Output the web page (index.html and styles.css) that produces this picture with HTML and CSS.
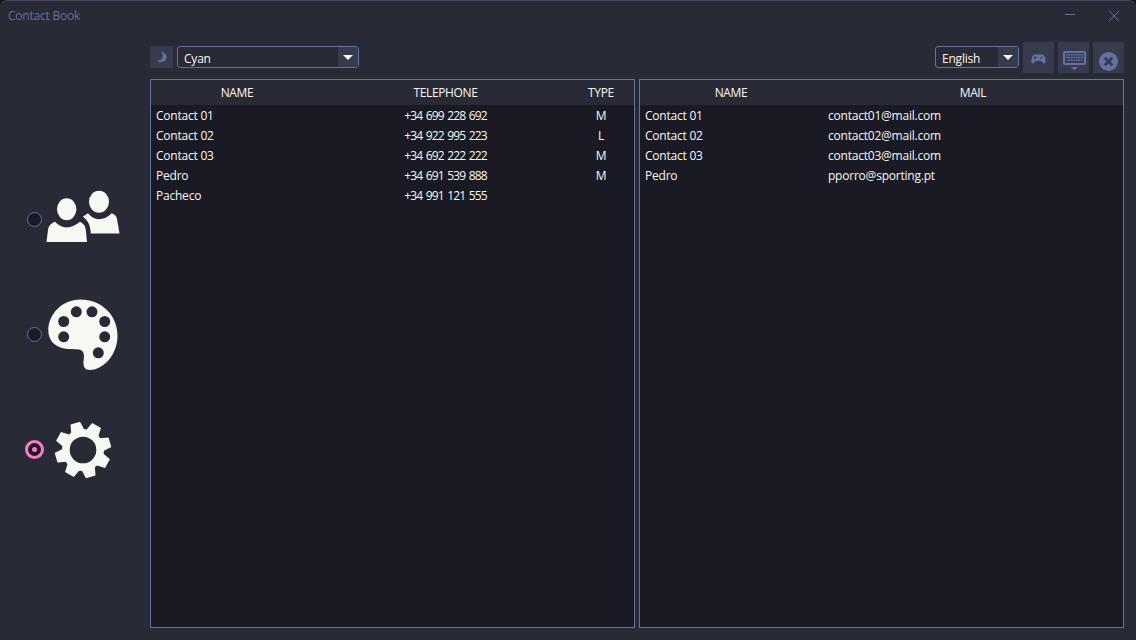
FILE: index.html
```html
<!DOCTYPE html>
<html lang="en">
<head>
<meta charset="utf-8">
<title>Contact Book</title>
<link rel="stylesheet" href="styles.css">
</head>
<body>
<div class="window">
  <header class="titlebar">
    <span class="title">Contact Book</span>
    <svg class="win-btn min" width="12" height="12" viewBox="0 0 12 12"><path d="M1 4.500H11" stroke="#6272a4" stroke-width="1"/></svg>
    <svg class="win-btn close" width="12" height="12" viewBox="0 0 12 12"><path d="M1 .8L11.200 11M11.200 .8L1 11" stroke="#6272a4" stroke-width="1"/></svg>
  </header>
  <div class="body">
    <nav class="sidebar">
      <div class="nav-row">
        <span class="radio"></span>
        <svg class="nav-icon people" width="74" height="52" viewBox="46 190 74 52">
          <ellipse cx="66.700" cy="209.300" rx="9.700" ry="11"/>
          <path d="M46.500 242L48 230C48.700 226 50 224 55 221.800C58 225 62 227.400 66.700 227.400C71.500 227.400 76 225 80 221.800C84 224 85.300 226 85.800 230L87 242Z"/>
          <ellipse cx="99" cy="201.700" rx="10" ry="11"/>
          <path d="M82.700 216.700L88 213.300C91 217 95 219.300 99 219.300C103.500 219.300 108 217 111.700 213.300C115 214.500 116.500 216 117 219L119.500 233.500H90.700C90.700 226 88 220 82.700 216.700Z"/>
        </svg>
      </div>
      <div class="nav-row">
        <span class="radio"></span>
        <svg class="nav-icon palette" width="72" height="72" viewBox="47 299.500 72 72">
          <path d="M80 300C102 300 117.500 316 117.500 336C117.500 355 104 370 90 370.500C85 370.500 83 367 83.500 362C84.500 356 84.500 351 79 350C74 349.500 70 350 64 349C54 347 48.300 340 48.300 331C48.300 314 63 300 80 300Z"/>
          <g class="hole">
            <circle cx="63.700" cy="322" r="5.500"/>
            <circle cx="76.300" cy="312.300" r="5.500"/>
            <circle cx="92" cy="312.300" r="5.500"/>
            <circle cx="104.700" cy="322" r="5.500"/>
            <circle cx="104.700" cy="337.300" r="5.500"/>
            <circle cx="98.300" cy="353.300" r="5.500"/>
            <circle cx="63.700" cy="337.300" r="5.500"/>
          </g>
        </svg>
      </div>
      <div class="nav-row">
        <span class="radio on"></span>
        <svg class="nav-icon gear" width="60" height="60" viewBox="-30 -30 60 60">
          <circle r="21"/>
          <g>
            <path transform="rotate(-16)" d="M-5 -28H5L6.800 -19H-6.800Z"/>
            <path transform="rotate(29)" d="M-5 -28H5L6.800 -19H-6.800Z"/>
            <path transform="rotate(74)" d="M-5 -28H5L6.800 -19H-6.800Z"/>
            <path transform="rotate(119)" d="M-5 -28H5L6.800 -19H-6.800Z"/>
            <path transform="rotate(164)" d="M-5 -28H5L6.800 -19H-6.800Z"/>
            <path transform="rotate(209)" d="M-5 -28H5L6.800 -19H-6.800Z"/>
            <path transform="rotate(254)" d="M-5 -28H5L6.800 -19H-6.800Z"/>
            <path transform="rotate(299)" d="M-5 -28H5L6.800 -19H-6.800Z"/>
          </g>
          <circle class="hole" r="13.300"/>
        </svg>
      </div>
    </nav>
    <main class="main">
      <div class="toolbar">
        <button class="moon-btn">
          <svg width="12" height="12" viewBox="0 0 12 12"><path d="M5 .5C9 1.500 11 4 10.500 7C10 10 7 11.500 3.500 11C2.500 10.800 1.500 10.200 1 9.500C4 10 6.500 8.500 6.800 5.500C7 3.500 6 2 5 .5Z" fill="#6272a4"/></svg>
        </button>
        <div class="combo theme"><span class="combo-text">Cyan</span><span class="combo-arrow"></span></div>
        <div class="spacer"></div>
        <div class="combo lang"><span class="combo-text">English</span><span class="combo-arrow"></span></div>
        <button class="icon-btn">
          <svg class="pad-icon" width="15" height="10" viewBox="0 0 15 10"><path d="M4 .5H11C12.800 .5 13.700 1.800 14.200 4C14.700 6.500 15 9.500 13.300 9.500C11.800 9.500 11.200 7.500 10 7H5C3.800 7.500 3.200 9.500 1.700 9.500C0 9.500 .3 6.500 .8 4C1.300 1.800 2.200 .5 4 .5Z" fill="#6272a4"/><path d="M2.800 3.700H5.600M4.200 2.300V5.100" stroke="#383b4d" stroke-width="1"/><circle cx="11" cy="3" r=".8" fill="#383b4d"/><circle cx="9.700" cy="4.500" r=".8" fill="#383b4d"/></svg>
        </button>
        <button class="icon-btn">
          <svg class="kbd-icon" width="23" height="19" viewBox="0 0 23 19"><rect x="1" y="1" width="21" height="12" rx="1" fill="none" stroke="#6272a4" stroke-width="2"/><path d="M3 3.800H20M3 6.500H20M4 9.200H19" stroke="#6272a4" stroke-width="1.500"/><path d="M5 3V11M7.500 3V11M10 3V11M12.500 3V11M15 3V11M17.500 3V11" stroke="#383b4d" stroke-width=".6"/><path d="M8 16H15L11.500 19Z" fill="#6272a4"/></svg>
        </button>
        <button class="icon-btn">
          <svg class="close-icon" width="19" height="19" viewBox="0 0 20 20"><circle cx="10" cy="10" r="10" fill="#6272a4"/><path d="M6 6L14 14M14 6L6 14" stroke="#383b4d" stroke-width="2.800"/></svg>
        </button>
      </div>
      <div class="tables">
        <section class="table contacts">
          <div class="row head"><span>NAME</span><span>TELEPHONE</span><span>TYPE</span></div>
          <div class="row"><span>Contact 01</span><span>+34 699 228 692</span><span>M</span></div>
          <div class="row"><span>Contact 02</span><span>+34 922 995 223</span><span>L</span></div>
          <div class="row"><span>Contact 03</span><span>+34 692 222 222</span><span>M</span></div>
          <div class="row"><span>Pedro</span><span>+34 691 539 888</span><span>M</span></div>
          <div class="row"><span>Pacheco</span><span>+34 991 121 555</span><span></span></div>
        </section>
        <section class="table mails">
          <div class="row head"><span>NAME</span><span>MAIL</span></div>
          <div class="row"><span>Contact 01</span><span>contact01@mail.com</span></div>
          <div class="row"><span>Contact 02</span><span>contact02@mail.com</span></div>
          <div class="row"><span>Contact 03</span><span>contact03@mail.com</span></div>
          <div class="row"><span>Pedro</span><span>pporro@sporting.pt</span></div>
        </section>
      </div>
    </main>
  </div>
</div>
</body>
</html>
```
FILE: styles.css
```css
* { box-sizing: border-box; }
html, body { margin: 0; height: 100%; background: #14151c; }
body { font-family: "Open Sans", "Noto Sans", sans-serif; font-size: 12px; letter-spacing: -0.22px; color: #f8f8f2; overflow: hidden; }
.window { width: 1136px; height: 640px; display: flex; flex-direction: column; background: #282a36; border-top: 1px solid #44475a; border-radius: 8px 8px 0 0; overflow: hidden; }
.titlebar { height: 39px; flex: none; display: flex; align-items: flex-start; padding: 7px 0 0 8px; }
.title { color: #6272a4; line-height: 16px; flex: 1; }
.win-btn { flex: none; margin-top: 2px; }
.min { margin-right: 32px; }
.close { margin-right: 16px; }
.body { flex: 1; display: flex; min-height: 0; }
.sidebar { width: 150px; flex: none; display: flex; flex-direction: column; justify-content: center; padding-bottom: 12px; }
.nav-row { height: 115px; display: flex; align-items: center; }
.radio { width: 15px; height: 15px; margin-left: 27px; border-radius: 50%; border: 1px solid #6272a4; background: #191a23; flex: none; }
.radio.on { width: 19px; height: 19px; margin-left: 25px; border: 3px solid #ff79c6; display: flex; align-items: center; justify-content: center; }
.radio.on::after { content: ""; width: 5px; height: 5px; border-radius: 50%; background: #ff79c6; }
.nav-icon { fill: #f8f8f2; flex: none; }
.hole, .hole circle { fill: #282a36; }
.people { margin-left: 4px; margin-bottom: 7px; }
.palette { margin-left: 5px; margin-top: 2px; }
.gear { margin-left: 9px; margin-top: 1px; }
.main { flex: 1; min-width: 0; display: flex; flex-direction: column; padding: 2px 12px 12px 0; }
.toolbar { height: 37px; flex: none; display: flex; align-items: flex-start; gap: 4px; }
.moon-btn { width: 23px; height: 22px; margin-top: 4px; padding: 0; border: 0; background: #383b4d; display: flex; align-items: center; justify-content: center; }
.icon-btn { width: 31px; height: 31px; padding: 0; border: 0; background: #383b4d; display: flex; align-items: center; justify-content: center; }
.pad-icon { margin-top: 2px; }
.kbd-icon { margin-top: 6px; margin-left: 1px; }
.close-icon { margin-top: 7px; }
.spacer { flex: 1; }
.combo { height: 22px; margin-top: 4px; border: 1px solid #6272a4; border-radius: 3px; display: flex; align-items: stretch; background: #282a36; }
.combo-text { flex: 1; padding-left: 6px; line-height: 24px; }
.combo-arrow { width: 20px; background: #383b4d; flex: none; display: flex; align-items: center; justify-content: center; }
.combo-arrow::after { content: ""; border: 5px solid transparent; border-top: 5px solid #f8f8f2; border-bottom: 0; }
.theme { width: 182px; }
.lang { width: 84px; }
.tables { flex: 1; min-height: 0; display: flex; gap: 4px; }
.table { width: 485px; height: 100%; border: 1px solid #6272a4; background: #191a23; }
.row { display: grid; height: 20px; align-items: start; line-height: 21px; }
.head { height: 25px; background: #282a36; line-height: 26px; letter-spacing: -0.35px; }
.head span { text-align: center; }
.contacts .row { grid-template-columns: 172px 245px 66px; }
.mails .row { grid-template-columns: 182px 302px; }
.row span:first-child { padding-left: 5px; }
.head span:first-child { padding-left: 0; }
.contacts .row span:nth-child(n+2) { text-align: center; }
.contacts .row:not(.head) span:nth-child(2) { letter-spacing: -0.82px; word-spacing: 1.1px; }
.mails .row span:nth-child(2) { padding-left: 6px; }
.mails .head span:nth-child(2) { padding-left: 0; }
```
